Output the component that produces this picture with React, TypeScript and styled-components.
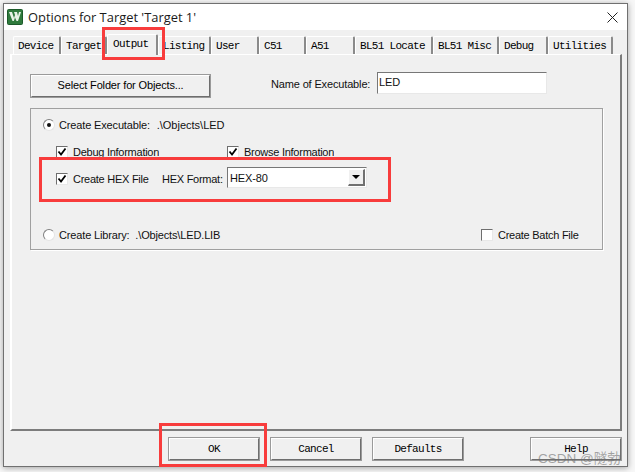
import React from "react";
import styled, { createGlobalStyle } from "styled-components";

const Global = createGlobalStyle`
  html, body { margin: 0; padding: 0; background: #fff; }
  * { box-sizing: border-box; }
`;

const Page = styled.div`
  position: relative;
  width: 635px;
  height: 472px;
  overflow: hidden;
  padding: 3px 7px 5px 3px;
  background: #f7f7f7;
  font-family: "Liberation Sans", Arial, sans-serif;
  font-size: 11px;
  letter-spacing: -0.15px;
  color: #111;
`;

const Window = styled.div`
  width: 625px;
  height: 464px;
  border: 1px solid #707070;
  background: #f0f0f0;
  display: flex;
  flex-direction: column;
  box-shadow: 0 1px 6px rgba(0, 0, 0, 0.35);
`;

const TitleBar = styled.div`
  height: 26px;
  flex: none;
  background: #fff;
  display: flex;
  align-items: center;
  padding: 0 9px 0 3px;
`;

const Title = styled.span`
  margin-left: 5px;
  font-family: "Open Sans", sans-serif;
  font-size: 12.9px;
  letter-spacing: 0;
  color: #1a1a1a;
  flex: 1;
`;

const Body = styled.div`
  flex: 1;
  padding: 4px 5px 0 6px;
  display: flex;
  flex-direction: column;
`;

const TabRow = styled.div`
  height: 20px;
  flex: none;
  display: flex;
  align-items: flex-end;
  padding-left: 3px;
  position: relative;
  z-index: 1;
`;

const Tab = styled.div<{ $w: number; $active?: boolean }>`
  width: ${(p) => p.$w}px;
  height: ${(p) => (p.$active ? 21 : 18)}px;
  margin-bottom: ${(p) => (p.$active ? -1 : 0)}px;
  flex: none;
  background: #f0f0f0;
  border-top: 1px solid #fff;
  border-left: 1px solid #fff;
  border-right: 2px solid #8a8a8a;
  border-radius: 2px 2px 0 0;
  padding: 3px 0 0 ${(p) => (p.$active ? 5 : 4)}px;
  font-family: "Liberation Mono", monospace;
  font-size: 11px;
  letter-spacing: -0.7px;
  line-height: 13px;
  white-space: pre;
  overflow: hidden;
  color: #000;
`;

const Panel = styled.div`
  height: 377px;
  flex: none;
  border-top: 1px solid #fff;
  border-left: 2px solid #fff;
  border-right: 2px solid #7c7c7c;
  border-bottom: 2px solid #7c7c7c;
  padding: 19px 18px 0 18px;
`;

const TopRow = styled.div`
  height: 25px;
  display: flex;
  align-items: flex-start;
`;

const RaisedButton = styled.div<{ $w: number; $mono?: boolean }>`
  width: ${(p) => p.$w}px;
  height: 24px;
  flex: none;
  background: #f0f0f0;
  border-top: 2px solid #fff;
  border-left: 2px solid #fff;
  border-right: 2px solid #6e6e6e;
  border-bottom: 2px solid #6e6e6e;
  outline: 1px solid #9a9a9a;
  outline-offset: -1px;
  display: flex;
  align-items: center;
  justify-content: center;
  padding-bottom: ${(p) => (p.$mono ? 1 : 3)}px;
  color: #000;
  ${(p) =>
    p.$mono
      ? `font-family: "Liberation Mono", monospace; font-size: 11px; letter-spacing: -0.7px;`
      : ""}
`;

const NameLabel = styled.span`
  margin: 2px 0 0 60px;
  width: 106px;
  line-height: 16px;
  white-space: nowrap;
`;

const NameInput = styled.div`
  width: 170px;
  height: 22px;
  margin-top: -2px;
  background: #fff;
  border-top: 1px solid #777;
  border-left: 1px solid #777;
  border-right: 1px solid #e8e8e8;
  border-bottom: 1px solid #e8e8e8;
  padding: 2px 1px;
  line-height: 15px;
`;

const Group = styled.div`
  width: 573px;
  height: 142px;
  margin-top: 9px;
  border: 1px solid #a0a0a0;
  box-shadow: 1px 1px 0 #fff;
  padding: 8px 0 0 12px;
`;

const Row = styled.div<{ $top?: number; $indent?: number }>`
  height: 16px;
  margin-top: ${(p) => p.$top ?? 0}px;
  padding-left: ${(p) => p.$indent ?? 0}px;
  display: flex;
  align-items: center;
  white-space: pre;
`;

const RadioDot = styled.span<{ $on?: boolean }>`
  width: 12px;
  height: 12px;
  flex: none;
  border-radius: 50%;
  margin-right: 4px;
  background: #fff;
  border: 1px solid;
  border-color: #808080 #e4e4e4 #e4e4e4 #808080;
  display: flex;
  align-items: center;
  justify-content: center;
  &::after {
    content: "";
    width: 4px;
    height: 4px;
    border-radius: 50%;
    background: ${(p) => (p.$on ? "#111" : "transparent")};
  }
`;

const CheckBox = styled.span`
  width: 12px;
  height: 12px;
  flex: none;
  margin-right: 5px;
  background: #fff;
  border: 1px solid;
  border-color: #6e6e6e #e8e8e8 #e8e8e8 #6e6e6e;
  display: flex;
  svg { display: block; }
`;

const Item = styled.span<{ $w?: number }>`
  display: flex;
  align-items: center;
  width: ${(p) => (p.$w ? `${p.$w}px` : "auto")};
  flex: none;
`;

const Narrow = styled.span`
  letter-spacing: -0.26px;
`;

const PathText = styled.span`
  margin-left: 1px;
  letter-spacing: 0;
`;

const Clipped = styled(Narrow)`
  height: 12px;
  line-height: 13px;
  overflow: hidden;
`;

const ShiftedUp = styled(Row)`
  margin-bottom: 0;
  height: 14px;
`;

const Combo = styled.div`
  width: 140px;
  height: 21px;
  margin-top: -3px;
  background: #fff;
  border-top: 1px solid #777;
  border-left: 1px solid #777;
  border-right: 1px solid #e8e8e8;
  border-bottom: 1px solid #e8e8e8;
  display: flex;
  align-items: center;
  justify-content: space-between;
  padding: 0 1px 0 2px;
`;

const ComboArrow = styled.span`
  width: 17px;
  height: 17px;
  background: #f0f0f0;
  border-top: 1px solid #fff;
  border-left: 1px solid #fff;
  border-right: 2px solid #707070;
  border-bottom: 2px solid #707070;
  display: flex;
  align-items: center;
  justify-content: center;
  &::after {
    content: "";
    border-left: 4px solid transparent;
    border-right: 4px solid transparent;
    border-top: 4px solid #000;
  }
`;

const Footer = styled.div`
  display: flex;
  gap: 10px;
  padding: 6px 0 0 158px;
`;

const HelpSlot = styled.div`
  margin-left: auto;
`;

const Callout = styled.div<{ $l: number; $t: number; $w: number; $h: number }>`
  position: absolute;
  left: ${(p) => p.$l}px;
  top: ${(p) => p.$t}px;
  width: ${(p) => p.$w}px;
  height: ${(p) => p.$h}px;
  border: 3px solid #f83c3c;
  z-index: 3;
`;

const Watermark = styled.div`
  position: absolute;
  left: 538px;
  top: 447px;
  font-family: "Liberation Sans", "Noto Sans CJK SC", sans-serif;
  font-size: 13.5px;
  letter-spacing: 0;
  color: rgba(110, 110, 110, 0.6);
  white-space: nowrap;
  z-index: 4;
`;

const Check = () => (
  <svg width="10" height="10" viewBox="0 0 10 10">
    <path d="M1.5 4.5 L4 7.5 L8.5 1.5" fill="none" stroke="#000" strokeWidth="1.8" />
  </svg>
);

const KeilIcon = () => (
  <svg width="16" height="16" viewBox="0 0 16 16">
    <rect x="0.5" y="0.5" width="15" height="15" rx="1" fill="#2f7a3c" stroke="#1c5a2a" />
    <path d="M2 3 H5 L7 9 L8 6 L7 3 H10 L11 7 L12 3 H14 L11 12 H9.5 L8 8.5 L6.8 12 H5.5 Z" fill="#e8f2e6" />
  </svg>
);

const CloseIcon = () => (
  <svg width="11" height="11" viewBox="0 0 11 11">
    <path d="M0.5 0.5 L10.5 10.5 M10.5 0.5 L0.5 10.5" stroke="#222" strokeWidth="1" />
  </svg>
);

const tabs: [string, number, boolean?][] = [
  ["Device", 48],
  ["Target", 46],
  ["Output", 51, true],
  ["Listing", 53],
  ["User", 48],
  ["C51", 47],
  ["A51", 49],
  ["BL51 Locate", 78],
  ["BL51 Misc", 66],
  ["Debug", 49],
  ["Utilities", 65],
];

export default function App() {
  return (
    <Page>
      <Global />
      <Window>
        <TitleBar>
          <KeilIcon />
          <Title>Options for Target 'Target 1'</Title>
          <CloseIcon />
        </TitleBar>
        <Body>
          <TabRow>
            {tabs.map(([label, w, active]) => (
              <Tab key={label} $w={w} $active={active}>
                {label}
              </Tab>
            ))}
          </TabRow>
          <Panel>
            <TopRow>
              <RaisedButton $w={181}>Select Folder for Objects...</RaisedButton>
              <NameLabel>Name of Executable:</NameLabel>
              <NameInput>LED</NameInput>
            </TopRow>
            <Group>
              <Row>
                <RadioDot $on />
                Create Executable:  <PathText>.\Objects\LED</PathText>
              </Row>
              <Row $top={11} $indent={13}>
                <Item $w={171}>
                  <CheckBox>
                    <Check />
                  </CheckBox>
                  <Clipped>Debug Information</Clipped>
                </Item>
                <Item>
                  <CheckBox>
                    <Check />
                  </CheckBox>
                  <Clipped>Browse Information</Clipped>
                </Item>
              </Row>
              <Row $top={11} $indent={13}>
                <Item $w={106}>
                  <CheckBox>
                    <Check />
                  </CheckBox>
                  <Narrow>Create HEX File</Narrow>
                </Item>
                <Item $w={65}>
                  <Narrow>HEX Format:</Narrow>
                </Item>
                <Combo>
                  HEX-80
                  <ComboArrow />
                </Combo>
              </Row>
              <ShiftedUp $top={41}>
                <RadioDot />
                <Item $w={422}>Create Library:  .\Objects\LED.LIB</Item>
                <CheckBox />
                <Narrow>Create Batch File</Narrow>
              </ShiftedUp>
            </Group>
          </Panel>
          <Footer>
            <RaisedButton $w={92} $mono>OK</RaisedButton>
            <RaisedButton $w={92} $mono>Cancel</RaisedButton>
            <RaisedButton $w={92} $mono>Defaults</RaisedButton>
            <HelpSlot>
              <RaisedButton $w={92} $mono>Help</RaisedButton>
            </HelpSlot>
          </Footer>
        </Body>
      </Window>
      <Callout $l={102} $t={27} $w={63} $h={33} />
      <Callout $l={39} $t={157} $w={352} $h={45} />
      <Callout $l={159} $t={423} $w={108} $h={44} />
      <Watermark>CSDN @隧勃</Watermark>
    </Page>
  );
}
